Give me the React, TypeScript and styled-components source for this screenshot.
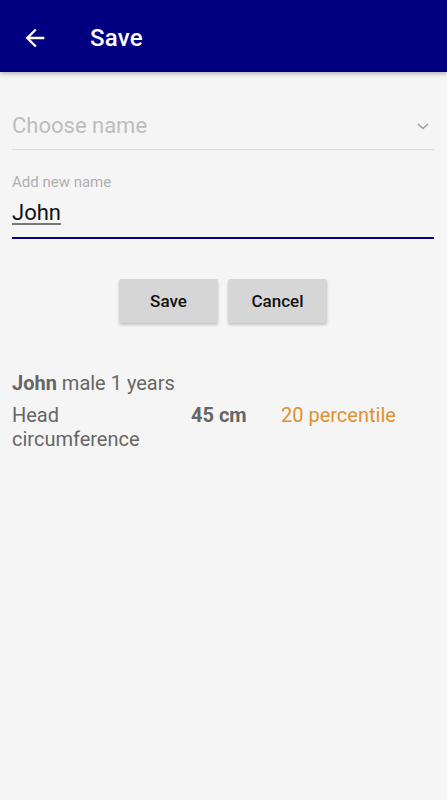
import React, { useState } from 'react';
import styled, { createGlobalStyle } from 'styled-components';

const GlobalStyle = createGlobalStyle`
  html, body {
    margin: 0;
    padding: 0;
    background: #f5f5f5;
    font-family: Roboto, "Noto Sans", "Liberation Sans", sans-serif;
  }
  * { box-sizing: border-box; }
`;

const Page = styled.div`
  min-height: 100vh;
  width: 100%;
  background: #f5f5f5;
`;

const AppBar = styled.header`
  height: 72px;
  background: #000080;
  display: flex;
  align-items: center;
  padding: 3px 0 0 21px;
  box-shadow: 0 2px 4px rgba(0, 0, 0, 0.25);
  position: relative;
  z-index: 1;
`;

const BackButton = styled.button`
  background: none;
  border: none;
  padding: 0;
  width: 28px;
  height: 28px;
  display: flex;
  align-items: center;
  justify-content: center;
  cursor: pointer;
`;

const Title = styled.h1`
  margin: 0 0 0 41px;
  font-size: 24px;
  font-weight: 500;
  color: #ffffff;
  letter-spacing: 0.2px;
`;

const Content = styled.main`
  padding: 24px 13px 0 12px;
`;

const SelectField = styled.div`
  height: 54px;
  display: flex;
  align-items: center;
  justify-content: space-between;
  padding: 6px 4px 0 0;
  border-bottom: 1px solid #dcdcdc;
`;

const Placeholder = styled.span`
  font-size: 22px;
  color: #bdbdbd;
`;

const InputField = styled.label`
  display: block;
  margin-top: 23px;
  border-bottom: 2px solid #000080;
  padding-bottom: 11px;
`;

const FieldLabel = styled.span`
  display: block;
  font-size: 15px;
  color: #b0b0b0;
  line-height: 18px;
`;

const NameInput = styled.input`
  display: block;
  width: 100%;
  margin-top: 9px;
  border: none;
  outline: none;
  background: transparent;
  padding: 0;
  font-family: inherit;
  font-size: 22px;
  line-height: 26px;
  height: 26px;
  color: #111111;
  text-decoration: underline;
  text-decoration-color: #777;
  text-underline-offset: 3px;
`;

const ButtonRow = styled.div`
  display: flex;
  justify-content: center;
  gap: 10px;
  margin-top: 40px;
`;

const ActionButton = styled.button`
  width: 99px;
  height: 44px;
  background: #d6d6d6;
  border: none;
  border-radius: 2px;
  box-shadow: 0 2px 3px rgba(0, 0, 0, 0.2);
  font-family: inherit;
  font-size: 17px;
  font-weight: 500;
  color: #111111;
  cursor: pointer;
`;

const Summary = styled.section`
  margin-top: 48px;
  color: #666666;
`;

const SummaryLine = styled.div`
  font-size: 20px;
  line-height: 24px;
`;

const Strong = styled.span`
  font-weight: 700;
`;

const MeasureRow = styled.div`
  display: grid;
  grid-template-columns: 179px 90px 1fr;
  margin-top: 8px;
  font-size: 20px;
  line-height: 24px;
`;

const MeasureValue = styled.span`
  font-weight: 700;
`;

const Percentile = styled.span`
  color: #df912f;
`;

export default function App() {
  const [name, setName] = useState('John');

  return (
    <Page>
      <GlobalStyle />
      <AppBar>
        <BackButton aria-label="Back">
          <svg width="28" height="28" viewBox="0 0 24 24">
            <path d="M20 11H7.83l5.59-5.59L12 4l-8 8 8 8 1.41-1.41L7.83 13H20v-2z" fill="#fff" />
          </svg>
        </BackButton>
        <Title>Save</Title>
      </AppBar>

      <Content>
        <SelectField>
          <Placeholder>Choose name</Placeholder>
          <svg width="14" height="10" viewBox="0 0 14 10">
            <path d="M2 3l5 4.5L12 3" fill="none" stroke="#9e9e9e" strokeWidth="1.6" />
          </svg>
        </SelectField>

        <InputField>
          <FieldLabel>Add new name</FieldLabel>
          <NameInput value={name} onChange={(e) => setName(e.target.value)} />
        </InputField>

        <ButtonRow>
          <ActionButton>Save</ActionButton>
          <ActionButton>Cancel</ActionButton>
        </ButtonRow>

        <Summary>
          <SummaryLine>
            <Strong>John</Strong> male 1 years
          </SummaryLine>
          <MeasureRow>
            <span>Head<br />circumference</span>
            <MeasureValue>45 cm</MeasureValue>
            <Percentile>20 percentile</Percentile>
          </MeasureRow>
        </Summary>
      </Content>
    </Page>
  );
}
